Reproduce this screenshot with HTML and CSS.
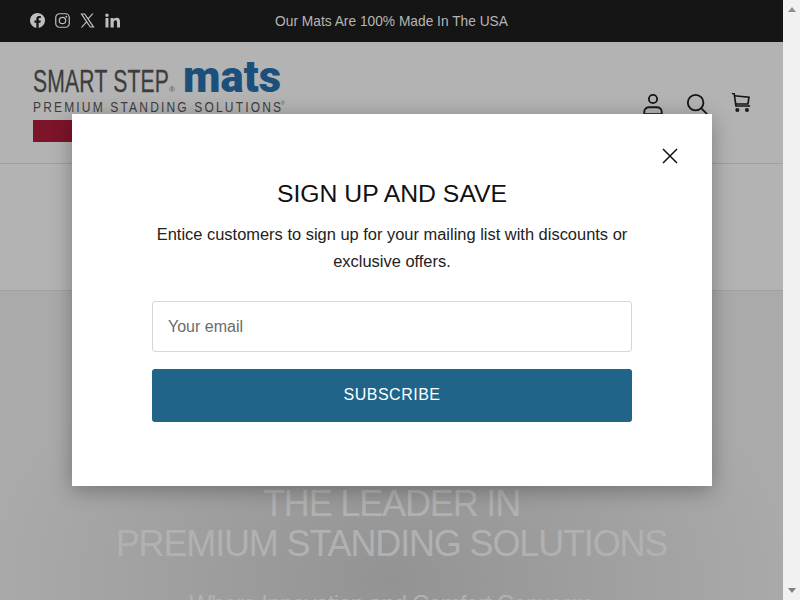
FILE: index.html
```html
<!DOCTYPE html>
<html lang="en">
<head>
<meta charset="utf-8">
<title>Smart Step Mats</title>
<link rel="stylesheet" href="styles.css">
</head>
<body>
<div class="window">
  <div class="page">
    <div class="announce">
      <div class="social">
        <svg class="soc" viewBox="0 0 16 16"><path fill="#fff" d="M16 8a8 8 0 1 0-9.25 7.9v-5.59H4.72V8h2.03V6.24c0-2 1.19-3.11 3.02-3.11.87 0 1.79.16 1.79.16v1.97h-1.01c-.99 0-1.3.62-1.3 1.25V8h2.22l-.35 2.31H9.25v5.59A8 8 0 0 0 16 8z"/></svg>
        <svg class="soc" viewBox="0 0 16 16"><g fill="none" stroke="#fff" stroke-width="1.3"><rect x=".8" y=".8" width="14.4" height="14.4" rx="4"/><circle cx="8" cy="8" r="3.4"/></g><circle cx="12.1" cy="3.9" r="1" fill="#fff"/></svg>
        <svg class="soc" viewBox="0 0 16 16"><path fill="#fff" d="M.4.5h4.9l3.4 4.8L12.9.5h1.6L9.4 6.3l6.2 9.2h-4.9L7 10.3 2.4 15.5H.8l5.5-6.2L.4.5zm2.3 1.2 8.6 12.6h1.9L4.6 1.7H2.7z"/></svg>
        <svg class="soc" viewBox="0 0 16 16"><path fill="#fff" d="M.5 5.3h3.2v10.2H.5V5.3zM2.1.5a1.85 1.85 0 1 1 0 3.7 1.85 1.85 0 0 1 0-3.7zM5.9 5.3H9v1.4c.5-.9 1.6-1.7 3.2-1.7 3.3 0 3.8 2.1 3.8 4.9v5.6h-3.2v-5c0-1.2 0-2.700-1.600-2.700s-1.900 1.300-1.900 2.600v5.100H5.900V5.300z"/></svg>
      </div>
      <p class="announce-text">Our Mats Are 100% Made In The USA</p>
    </div>
    <header class="header">
      <svg class="logo" viewBox="0 0 252 77" aria-label="Smart Step Mats">
        <text x="0" y="27" transform="scale(.66 1)" class="logo-smart" textLength="206" lengthAdjust="spacing">SMART STEP</text>
        <text x="136" y="27" class="logo-reg">®</text>
        <text x="150" y="27" class="logo-mats" textLength="98" lengthAdjust="spacingAndGlyphs">mats</text>
        <text x="0" y="47" transform="scale(.8 1)" class="logo-sub" textLength="310" lengthAdjust="spacing">PREMIUM STANDING SOLUTIONS</text>
        <text x="248" y="40" class="logo-reg2">®</text>
        <rect x="0" y="55" width="60" height="22" fill="#7d1429"/>
      </svg>
      <div class="header-icons">
        <svg class="hicon" viewBox="0 0 24 24"><g fill="none" stroke="#151515" stroke-width="2"><circle cx="12" cy="6.500" r="4.500"/><path d="M2.500 23v-2.500c0-3 2.500-5 5.500-5h8c3 0 5.500 2 5.500 5V23z"/></g></svg>
        <svg class="hicon" viewBox="0 0 24 24"><g fill="none" stroke="#151515" stroke-width="2"><circle cx="10.500" cy="10.500" r="8.500"/><path d="m16.500 16.500 6.500 6.500"/></g></svg>
        <svg class="hicon" viewBox="0 0 24 24"><g fill="none" stroke="#151515" stroke-width="1.800"><path d="M2 .5h2.500l2 13.700h15.500"/><path d="M4.600 3l16.100 1.600-1.100 7.400H6.100"/><circle cx="8" cy="18.500" r="1.300"/><circle cx="18.500" cy="18.500" r="1.300"/></g></svg>
      </div>
    </header>
    <nav class="nav-row"></nav>
    <section class="hero">
      <h1 class="hero-title">THE LEADER IN<br>PREMIUM STANDING SOLUTIONS</h1>
      <p class="hero-sub">Where Innovation and Comfort Converge</p>
    </section>
  </div>
  <div class="scrollbar">
    <span class="arrow-up"></span>
    <span class="arrow-down"></span>
  </div>
  <div class="modal">
    <button class="close" aria-label="Close"><svg viewBox="0 0 16 16" class="close-icon"><path d="M1 1l14 14M15 1 1 15" fill="none" stroke="#111" stroke-width="1.500"/></svg></button>
    <h2 class="modal-title">SIGN UP AND SAVE</h2>
    <p class="modal-text">Entice customers to sign up for your mailing list with discounts or exclusive offers.</p>
    <div class="field">Your email</div>
    <div class="submit">SUBSCRIBE</div>
  </div>
</div>
</body>
</html>
```
FILE: styles.css
```css
* { box-sizing: border-box; }
html, body { margin: 0; height: 100%; overflow: hidden; }
body { font-family: "Liberation Sans", Arial, sans-serif; }
.window { display: flex; width: 800px; height: 600px; position: relative; overflow: hidden; }
.page { width: 783px; height: 600px; display: flex; flex-direction: column; background: #b3b3b3; overflow: hidden; }
.announce { height: 42px; flex: none; background: #151515; position: relative; display: flex; align-items: center; justify-content: center; }
.social { position: absolute; left: 30px; top: 13px; display: flex; gap: 10px; }
.soc { width: 15px; height: 15px; opacity: .72; display: block; }
.announce-text { margin: 0; font-size: 13.75px; color: #b5b5b5; }
.header { height: 122px; flex: none; border-bottom: 1px solid #a0a0a0; padding: 23px 31px 0 33px; display: flex; justify-content: space-between; align-items: flex-start; }
.logo { width: 252px; height: 77px; display: block; overflow: visible; }
.logo-smart { font: 400 32px "Liberation Sans", sans-serif; fill: #3d3d3e; stroke: #3d3d3e; stroke-width: .3px; }
.logo-reg { font: 400 8px "Liberation Sans", sans-serif; fill: #555; }
.logo-reg2 { font: 400 5px "Liberation Sans", sans-serif; fill: #555; }
.logo-mats { font: 900 45px Roboto, "Liberation Sans", sans-serif; fill: #1b4f7c; }
.logo-sub { font: 400 15px "Liberation Sans", sans-serif; fill: #3d3d3e; }
.header-icons { display: flex; gap: 22px; padding-top: 28px; }
.hicon { width: 22px; height: 22px; display: block; }
.nav-row { height: 127px; flex: none; border-bottom: 1px solid #a0a0a0; }
.hero { flex: 1; background: radial-gradient(ellipse 400px 280px at 391px 290px, #939393, #aaaaaa); text-align: center; color: #b1b1b1; padding-top: 193px; }
.hero-title { margin: 0; font-size: 36px; font-weight: 400; line-height: 40px; letter-spacing: -1.15px; }
.hero-sub { margin: 25px 0 0; font-size: 24px; line-height: 30px; letter-spacing: -.9px; }
.scrollbar { width: 17px; background: #f1f1f1; display: flex; flex-direction: column; justify-content: space-between; align-items: center; padding: 7px 0; }
.arrow-up { border: 4px solid transparent; border-top: 0; border-bottom: 5px solid #909090; }
.arrow-down { border: 4px solid transparent; border-bottom: 0; border-top: 5px solid #808080; }
.modal { position: absolute; left: 72px; top: 114px; width: 640px; height: 372px; background: #fff; box-shadow: 0 4px 20px rgba(0,0,0,.3); padding: 65px 80px 0; display: flex; flex-direction: column; align-items: stretch; text-align: center; }
.close { position: absolute; right: 34px; top: 34px; width: 16px; height: 16px; padding: 0; border: 0; background: none; }
.close-icon { display: block; width: 16px; height: 16px; }
.modal-title { margin: 0; font-size: 24.75px; font-weight: 400; line-height: 30px; color: #111; }
.modal-text { margin: 12px 0 0; font-size: 16.45px; line-height: 27px; color: #222; }
.field { margin-top: 26px; height: 51px; border: 1px solid #d6d6d6; border-radius: 3px; padding: 0 15px; font-size: 16px; line-height: 49px; color: #6b6b6b; text-align: left; }
.submit { margin-top: 17px; height: 53px; border-radius: 3px; background: #206489; color: #fff; font-size: 16px; letter-spacing: .5px; line-height: 51px; }
```
